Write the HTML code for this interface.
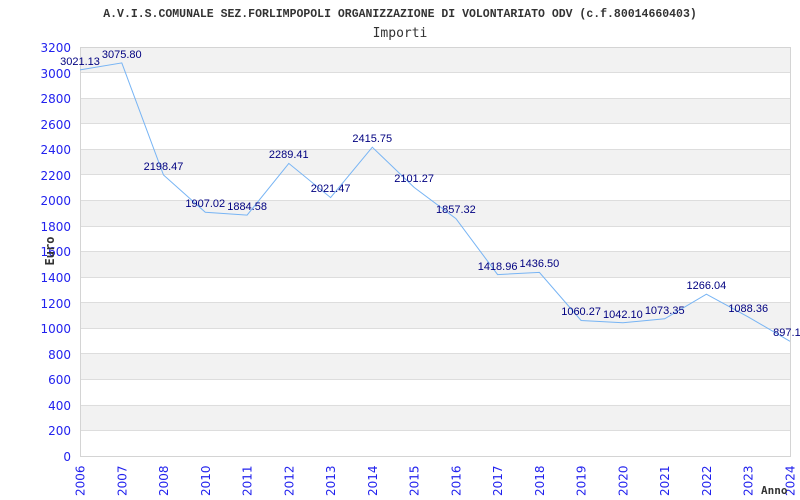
<!DOCTYPE html>
<html><head><style>
html,body{margin:0;padding:0;background:#fff;width:800px;height:500px;overflow:hidden}
</style></head><body>
<svg width="800" height="500" xmlns="http://www.w3.org/2000/svg">
<text x="400" y="17" text-anchor="middle" font-family="Liberation Mono, monospace" font-size="11.5" font-weight="bold" fill="#333">A.V.I.S.COMUNALE SEZ.FORLIMPOPOLI ORGANIZZAZIONE DI VOLONTARIATO ODV (c.f.80014660403)</text>
<text x="400" y="37" text-anchor="middle" font-family="DejaVu Sans Mono, monospace" font-size="13" fill="#333">Importi</text>
<g fill="#f2f2f2">
<rect x="80" y="47" width="710" height="25.56"/>
<rect x="80" y="98.1" width="710" height="25.56"/>
<rect x="80" y="149.25" width="710" height="25.56"/>
<rect x="80" y="200.4" width="710" height="25.56"/>
<rect x="80" y="251.5" width="710" height="25.56"/>
<rect x="80" y="302.6" width="710" height="25.56"/>
<rect x="80" y="353.75" width="710" height="25.56"/>
<rect x="80" y="404.9" width="710" height="25.56"/>
</g>
<g stroke="#ddd" stroke-width="1">
<line x1="80" x2="790" y1="72.5" y2="72.5"/><line x1="80" x2="790" y1="98.5" y2="98.5"/>
<line x1="80" x2="790" y1="123.5" y2="123.5"/><line x1="80" x2="790" y1="149.5" y2="149.5"/>
<line x1="80" x2="790" y1="174.5" y2="174.5"/><line x1="80" x2="790" y1="200.5" y2="200.5"/>
<line x1="80" x2="790" y1="226.5" y2="226.5"/><line x1="80" x2="790" y1="251.5" y2="251.5"/>
<line x1="80" x2="790" y1="277.5" y2="277.5"/><line x1="80" x2="790" y1="302.5" y2="302.5"/>
<line x1="80" x2="790" y1="328.5" y2="328.5"/><line x1="80" x2="790" y1="353.5" y2="353.5"/>
<line x1="80" x2="790" y1="379.5" y2="379.5"/><line x1="80" x2="790" y1="405.5" y2="405.5"/>
<line x1="80" x2="790" y1="430.5" y2="430.5"/>
<rect x="80.5" y="47.5" width="710" height="409" fill="none" stroke="#d4d4d4"/>
</g>
<g font-family="DejaVu Sans, sans-serif" font-size="12" fill="#2222ee" text-anchor="end">
<text x="71" y="52">3200</text><text x="71" y="78">3000</text><text x="71" y="103">2800</text>
<text x="71" y="129">2600</text><text x="71" y="154">2400</text><text x="71" y="180">2200</text>
<text x="71" y="205">2000</text><text x="71" y="231">1800</text><text x="71" y="256">1600</text>
<text x="71" y="282">1400</text><text x="71" y="308">1200</text><text x="71" y="333">1000</text>
<text x="71" y="359">800</text><text x="71" y="384">600</text><text x="71" y="410">400</text>
<text x="71" y="435">200</text><text x="71" y="461">0</text>
</g>
<text transform="translate(54,251) rotate(-90)" text-anchor="middle" font-family="DejaVu Sans Mono, monospace" font-size="12" font-weight="bold" fill="#333">Euro</text>
<g font-family="DejaVu Sans, sans-serif" font-size="12" fill="#2222ee">
<text transform="translate(84.5,496) rotate(-90)">2006</text>
<text transform="translate(126.3,496) rotate(-90)">2007</text>
<text transform="translate(168,496) rotate(-90)">2008</text>
<text transform="translate(209.8,496) rotate(-90)">2010</text>
<text transform="translate(251.6,496) rotate(-90)">2011</text>
<text transform="translate(293.3,496) rotate(-90)">2012</text>
<text transform="translate(335.1,496) rotate(-90)">2013</text>
<text transform="translate(376.8,496) rotate(-90)">2014</text>
<text transform="translate(418.6,496) rotate(-90)">2015</text>
<text transform="translate(460.4,496) rotate(-90)">2016</text>
<text transform="translate(502.1,496) rotate(-90)">2017</text>
<text transform="translate(543.9,496) rotate(-90)">2018</text>
<text transform="translate(585.6,496) rotate(-90)">2019</text>
<text transform="translate(627.4,496) rotate(-90)">2020</text>
<text transform="translate(669.2,496) rotate(-90)">2021</text>
<text transform="translate(710.9,496) rotate(-90)">2022</text>
<text transform="translate(752.7,496) rotate(-90)">2023</text>
<text transform="translate(794.5,496) rotate(-90)">2024</text>
</g>
<text x="761" y="494" font-family="DejaVu Sans Mono, monospace" font-size="11" font-weight="bold" fill="#333">Anno</text>
<polyline fill="none" stroke="#77b4f4" stroke-width="1" points="80,69.9 121.8,62.9 163.5,175 205.3,212.3 247.1,215.1 288.8,163.4 330.6,197.6 372.3,147.2 414.1,187.4 455.9,218.6 497.6,274.6 539.4,272.4 581.1,320.5 622.9,322.8 664.7,318.8 706.4,294.2 748.2,316.9 790,341.3"/>
<g font-family="Liberation Sans, Arial, sans-serif" font-size="11" fill="#000080" text-anchor="middle">
<text x="80" y="65">3021.13</text><text x="121.8" y="58">3075.80</text><text x="163.5" y="170">2198.47</text>
<text x="205.3" y="207">1907.02</text><text x="247.1" y="210">1884.58</text><text x="288.8" y="158">2289.41</text>
<text x="330.6" y="192">2021.47</text><text x="372.3" y="142">2415.75</text><text x="414.1" y="182">2101.27</text>
<text x="455.9" y="213">1857.32</text><text x="497.6" y="270">1418.96</text><text x="539.4" y="267">1436.50</text>
<text x="581.1" y="315">1060.27</text><text x="622.9" y="318">1042.10</text><text x="664.7" y="314">1073.35</text>
<text x="706.4" y="289">1266.04</text><text x="748.2" y="312">1088.36</text><text x="790" y="336">897.13</text>
</g>
</svg>
</body></html>
